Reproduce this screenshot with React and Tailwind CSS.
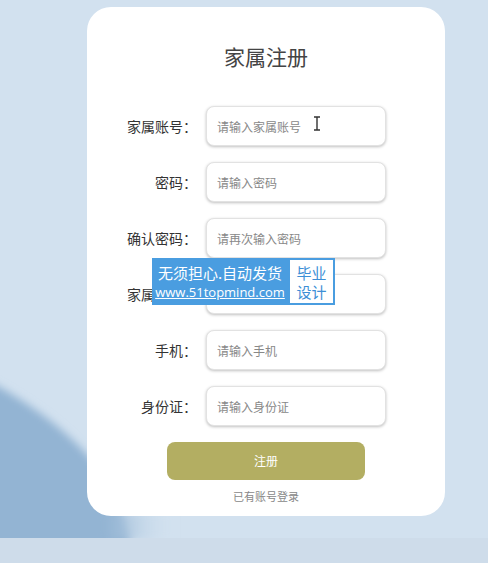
import React from 'react';

const fields = [
  { label: '家属账号：', placeholder: '请输入家属账号', type: 'text' },
  { label: '密码：', placeholder: '请输入密码', type: 'password' },
  { label: '确认密码：', placeholder: '请再次输入密码', type: 'password' },
  { label: '家属姓名：', placeholder: '请输入家属姓名', type: 'text' },
  { label: '手机：', placeholder: '请输入手机', type: 'text' },
  { label: '身份证：', placeholder: '请输入身份证', type: 'text' },
];

function Field({ label, placeholder, type }) {
  return (
    <div className="flex items-center gap-[9px]">
      <label className="w-[110px] text-right text-[14px] text-[#333]">{label}</label>
      <input
        type={type}
        placeholder={placeholder}
        className="w-[180px] h-[40px] rounded-lg border border-[#e2e2e2] bg-white px-[10px] text-[12px] text-[#333] placeholder:text-[#888] shadow-[0_1px_3px_rgba(0,0,0,0.25)] outline-none"
      />
    </div>
  );
}

export default function App() {
  return (
    <div
      className="relative w-full h-[563px] overflow-hidden bg-[#d2e1ef]"
      style={{ fontFamily: '"Noto Sans CJK SC", "Noto Sans", sans-serif' }}
    >
      {/* background wave */}
      <svg className="absolute inset-0" width="488" height="563" viewBox="0 0 488 563">
        <defs>
          <filter id="soft" x="-20%" y="-20%" width="140%" height="140%">
            <feGaussianBlur stdDeviation="4" />
          </filter>
          <linearGradient id="shade" x1="0" y1="0" x2="1" y2="0">
            <stop offset="0" stopColor="#93b4d3" />
            <stop offset="1" stopColor="#d2e1ef" stopOpacity="0" />
          </linearGradient>
        </defs>
        <path d="M-60,360 C10,385 70,430 100,470 C115,495 125,520 135,560 L-60,560 Z" fill="#93b4d3" filter="url(#soft)" />
        <rect x="105" y="512" width="70" height="28" fill="url(#shade)" filter="url(#soft)" />
        <rect x="0" y="538" width="488" height="25" fill="#cedcea" />
      </svg>

      <div className="relative pl-[87px] pt-[7px]">
        <div className="w-[358px] h-[509px] rounded-[24px] bg-white flex flex-col">
          <h1 className="pt-[36px] text-center text-[21px] leading-[26px] text-[#444]">家属注册</h1>
          <form className="mt-[37px] flex flex-col gap-[16px]" onSubmit={(e) => e.preventDefault()}>
            {fields.map((f) => (
              <Field key={f.label} {...f} />
            ))}
            <div className="flex flex-col items-center">
              <button
                type="submit"
                className="w-[198px] h-[38px] rounded-lg bg-[#b3ae62] text-[12px] text-white"
              >
                注册
              </button>
              <a className="mt-[8px] text-[11px] leading-[16px] text-[#888] cursor-pointer">已有账号登录</a>
            </div>
          </form>
        </div>
      </div>

      {/* text cursor */}
      <svg className="absolute left-[313px] top-[116px]" width="8" height="15" viewBox="0 0 8 15">
        <path d="M1,1 H7 M4,1 V14 M1,14 H7" stroke="#333" strokeWidth="1.4" fill="none" />
      </svg>

      {/* watermark overlay */}
      <div className="absolute left-[152px] top-[258px] flex h-[47px]">
        <div className="w-[136px] bg-[#4a9de0] flex flex-col items-center justify-center text-white leading-none">
          <span className="text-[15px]">无须担心.自动发货</span>
          <span className="mt-[6px] text-[13px] underline" style={{ fontFamily: '"Open Sans", sans-serif' }}>www.51topmind.com</span>
        </div>
        <div className="w-[47px] bg-white border-2 border-[#4a9de0] flex flex-col items-center justify-center text-[#3d8fd6] text-[15px] leading-[19px]">
          <span>毕业</span>
          <span>设计</span>
        </div>
      </div>
    </div>
  );
}
